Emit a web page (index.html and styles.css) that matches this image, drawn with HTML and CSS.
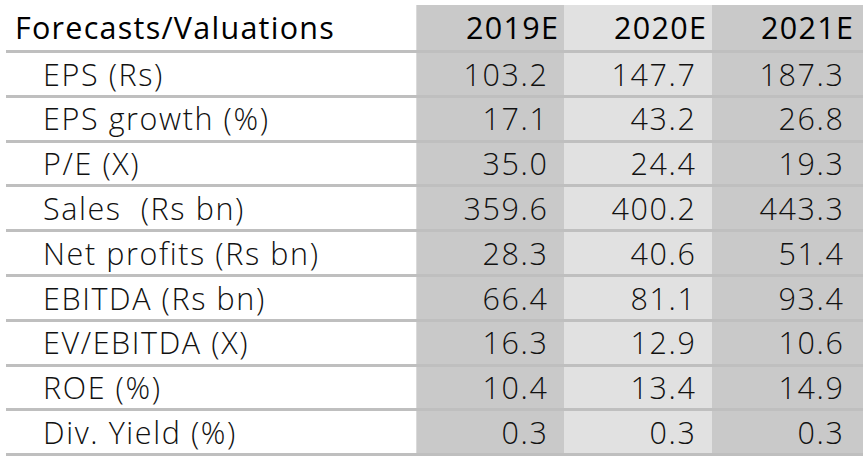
FILE: index.html
```html
<!DOCTYPE html>
<html lang="en">
<head>
<meta charset="utf-8">
<title>Forecasts/Valuations</title>
<link rel="stylesheet" href="styles.css">
</head>
<body>
<table class="fv">
  <colgroup>
    <col class="c-label">
    <col class="c-y1">
    <col class="c-y2">
    <col class="c-y3">
  </colgroup>
  <thead>
    <tr>
      <th class="label head">Forecasts/Valuations</th>
      <th class="num head y1">2019E</th>
      <th class="num head y2">2020E</th>
      <th class="num head y3">2021E</th>
    </tr>
  </thead>
  <tbody>
    <tr><td class="label">EPS (Rs)</td><td class="num y1">103.2</td><td class="num y2">147.7</td><td class="num y3">187.3</td></tr>
    <tr><td class="label">EPS growth (%)</td><td class="num y1">17.1</td><td class="num y2">43.2</td><td class="num y3">26.8</td></tr>
    <tr><td class="label">P/E (X)</td><td class="num y1">35.0</td><td class="num y2">24.4</td><td class="num y3">19.3</td></tr>
    <tr><td class="label">Sales&nbsp; (Rs bn)</td><td class="num y1">359.6</td><td class="num y2">400.2</td><td class="num y3">443.3</td></tr>
    <tr><td class="label">Net profits (Rs bn)</td><td class="num y1">28.3</td><td class="num y2">40.6</td><td class="num y3">51.4</td></tr>
    <tr><td class="label">EBITDA (Rs bn)</td><td class="num y1">66.4</td><td class="num y2">81.1</td><td class="num y3">93.4</td></tr>
    <tr><td class="label">EV/EBITDA (X)</td><td class="num y1">16.3</td><td class="num y2">12.9</td><td class="num y3">10.6</td></tr>
    <tr><td class="label">ROE (%)</td><td class="num y1">10.4</td><td class="num y2">13.4</td><td class="num y3">14.9</td></tr>
    <tr><td class="label">Div. Yield (%)</td><td class="num y1">0.3</td><td class="num y2">0.3</td><td class="num y3">0.3</td></tr>
  </tbody>
</table>
</body>
</html>
```

FILE: styles.css
```css
html, body {
  margin: 0;
  padding: 0;
  background: #ffffff;
}

body {
  font-family: "Open Sans", "Noto Sans", "DejaVu Sans", sans-serif;
  color: #111111;
}

.fv {
  margin: 5px 0 0 6px;
  width: 857px;
  border-collapse: collapse;
  table-layout: fixed;
  font-size: 30.5px;
  letter-spacing: 1.6px;
}

.c-label { width: 410px; }
.c-y1 { width: 148px; }
.c-y2 { width: 148px; }
.c-y3 { width: 151px; }

.fv th,
.fv td {
  padding: 0;
  white-space: nowrap;
  line-height: 1;
  vertical-align: middle;
}

.fv th {
  height: 45px;
  font-weight: 400;
  color: #000000;
  border-bottom: 3px solid #bfbfbf;
}

.fv td {
  height: 41.8px;
  font-weight: 300;
  border-bottom: 3px solid #bfbfbf;
}

.label {
  text-align: left;
  padding-left: 37px !important;
}

.label.head {
  padding-left: 9px !important;
  letter-spacing: 1.25px;
}

.num {
  text-align: right;
  padding-right: 15.5px !important;
}

.num.head {
  padding-right: 4.7px !important;
  letter-spacing: 1.3px;
}

.num.y3 {
  padding-right: 18.5px !important;
}

.num.head.y3 {
  padding-right: 8.7px !important;
}

.y1 {
  background: #c9c9c9;
  box-shadow: inset 1px 0 0 #dadada;
}

.y2 {
  background: #e1e1e1;
}

.y3 {
  background: #c9c9c9;
}
```
